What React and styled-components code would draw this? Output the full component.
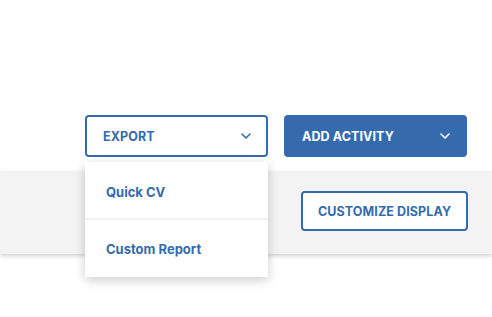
import React from 'react'
import styled, { createGlobalStyle } from 'styled-components'

const BLUE = '#356bac'

const GlobalStyle = createGlobalStyle`
  body {
    margin: 0;
    background: #fff;
    font-family: Inter, 'Liberation Sans', sans-serif;
  }
`

const Page = styled.div`
  padding-top: 115px;
  height: 317px;
  box-sizing: border-box;
  overflow: hidden;
`

const Toolbar = styled.div`
  display: flex;
  justify-content: flex-end;
  gap: 16px;
  padding-right: 25px;
  position: relative;
  z-index: 2;
`

const MenuWrap = styled.div`
  position: relative;
`

const Button = styled.button`
  box-sizing: border-box;
  width: ${(p) => p.$width || 183}px;
  height: ${(p) => p.$height || 42}px;
  display: flex;
  align-items: center;
  justify-content: ${(p) => (p.$center ? 'center' : 'space-between')};
  padding: ${(p) => (p.$center ? '0' : '0 15px 0 16px')};
  border: 2px solid ${BLUE};
  border-radius: 4px;
  background: ${(p) => (p.$filled ? BLUE : '#fff')};
  color: ${(p) => (p.$filled ? '#fff' : BLUE)};
  font-family: inherit;
  font-size: 12.5px;
  font-weight: 700;
  letter-spacing: 0.1px;
  text-transform: uppercase;
  white-space: nowrap;
  cursor: pointer;
`

const Menu = styled.ul`
  position: absolute;
  top: 47px;
  left: 0;
  width: 183px;
  margin: 0;
  padding: 0;
  list-style: none;
  background: #fff;
  box-shadow: 0 3px 10px rgba(0, 0, 0, 0.2);
`

const MenuItem = styled.li`
  box-sizing: border-box;
  height: ${(p) => p.$h}px;
  display: flex;
  align-items: center;
  padding-left: 21px;
  padding-top: ${(p) => p.$shift || 0}px;
  color: ${BLUE};
  font-size: 13px;
  font-weight: 700;
  & + & {
    border-top: 2px solid #f1f1f1;
  }
`

const Band = styled.div`
  box-sizing: border-box;
  margin-top: 14px;
  height: 83px;
  background: #f3f3f3;
  display: flex;
  align-items: center;
  justify-content: flex-end;
  padding: 0 24px 3px 0;
  box-shadow: 0 2px 4px rgba(0, 0, 0, 0.18);
  position: relative;
  z-index: 1;
`

const Chevron = () => (
  <svg width='10' height='6' viewBox='0 0 10 6' fill='none'>
    <path d='M1 1l4 4 4-4' stroke='currentColor' strokeWidth='1.6' strokeLinecap='round' strokeLinejoin='round' />
  </svg>
)

export default function App () {
  return (
    <>
      <GlobalStyle />
      <Page>
        <Toolbar>
          <MenuWrap>
            <Button>
              Export
              <Chevron />
            </Button>
            <Menu>
              <MenuItem $h={56} $shift={3}>Quick CV</MenuItem>
              <MenuItem $h={59}>Custom Report</MenuItem>
            </Menu>
          </MenuWrap>
          <Button $filled>
            Add Activity
            <Chevron />
          </Button>
        </Toolbar>
        <Band>
          <Button $center $width={167} $height={40}>Customize Display</Button>
        </Band>
      </Page>
    </>
  )
}
